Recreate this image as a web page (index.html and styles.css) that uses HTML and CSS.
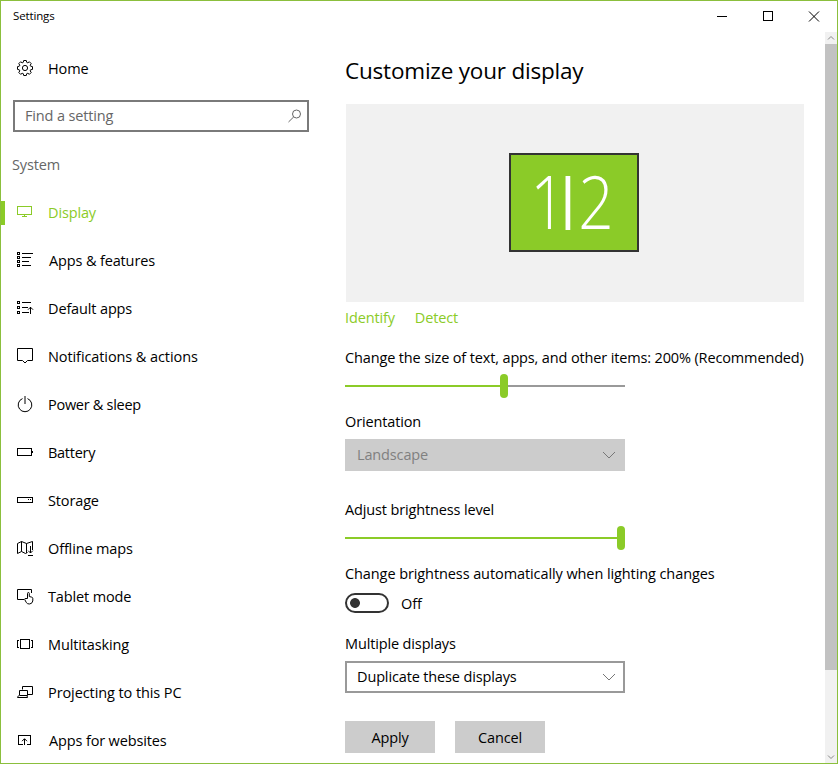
FILE: index.html
```html
<!DOCTYPE html>
<html lang="en">
<head>
<meta charset="utf-8">
<title>Settings</title>
<link rel="stylesheet" href="styles.css">
</head>
<body>
<div class="window">
  <header class="titlebar">
    <span class="caption">Settings</span>
    <div class="controls">
      <svg width="46" height="31"><path class="crisp" d="M17 15.500h10"/></svg>
      <svg width="46" height="31"><path class="crisp" d="M17.500 10.500h9v9h-9z"/></svg>
      <svg width="46" height="31"><path d="M17 10.500l10 10M27 10.500l-10 10"/></svg>
    </div>
  </header>
  <div class="content">
    <nav class="sidebar">
      <a class="item home"><svg class="icon" viewBox="0 0 18 18"><path d="M7.700 1.500h2.600l.4 1.800 1.100.5 1.600-1 1.800 1.800-1 1.600.4 1 1.900.4v2.800l-1.900.4-.4 1.100 1 1.600-1.800 1.800-1.600-1-1.100.4-.4 1.800H7.700l-.4-1.800-1.100-.4-1.600 1-1.800-1.800 1-1.600-.5-1.100-1.800-.4V7.600l1.800-.4.5-1-1-1.600 1.800-1.800 1.600 1 1.100-.5z"/><circle cx="9" cy="9" r="2.600"/></svg><span>Home</span></a>
      <div class="search"><span>Find a setting</span><svg width="16" height="16" viewBox="0 0 16 16"><circle cx="9.500" cy="6" r="4"/><path d="M6.600 9L1.500 14"/></svg></div>
      <h2 class="group"><span>System</span></h2>
      <a class="item active"><svg class="icon crisp" viewBox="0 0 18 18"><path d="M1.500 2.500h14v8h-14zM8.500 11v1M6 12.500h5"/></svg><span>Display</span></a>
      <a class="item indent"><svg class="icon crisp" viewBox="0 0 18 18"><path d="M1.500.5h2v2h-2zM1.500 4.500h2v2h-2zM1.500 8.500h2v2h-2zM1.500 12.500h2v2h-2zM6 1.500h11M6 5.500h9M6 9.500h7M6 13.500h9"/></svg><span>Apps &amp; features</span></a>
      <a class="item"><svg class="icon" viewBox="0 0 18 18"><path class="crisp" d="M1.500 1.500h2v2h-2zM1.500 6.500h2v2h-2zM1.500 11.500h2v2h-2zM6 2.500h9M6 7.500h6M6 12.500h7M14.500 7v7"/><path d="M12 9.700l2.500-2.500L17 9.700"/></svg><span>Default apps</span></a>
      <a class="item"><svg class="icon" viewBox="0 0 18 18"><path d="M1.500.5h15v12h-5L9 15l-2.500-2.500h-5z"/></svg><span class="wide">Notifications &amp; actions</span></a>
      <a class="item"><svg class="icon" viewBox="0 0 18 18"><path d="M6.500 2.600a6.800 6.800 0 1 0 5 0M9 0v8"/></svg><span class="tight">Power &amp; sleep</span></a>
      <a class="item"><svg class="icon crisp" viewBox="0 0 18 18"><path d="M1.500 4.500h14v7h-14zM16.500 7v2"/></svg><span class="tight">Battery</span></a>
      <a class="item"><svg class="icon crisp" viewBox="0 0 18 18"><path d="M1.500 5.500h15v5h-15zM12 7.500h1M14 7.500h1"/></svg><span>Storage</span></a>
      <a class="item"><svg class="icon" viewBox="0 0 18 18"><path d="M1.500 3.500l4-2 5 2 6-2V10M1.500 3.500v10l4-2 4 2 2-1M5.500 1.500v10M10.500 3.500v9.500M14.500 6v7M12.200 10.700l2.300 2.300 2.300-2.300M12 15.500h5"/></svg><span>Offline maps</span></a>
      <a class="item"><svg class="icon" viewBox="0 0 18 18"><path d="M8 11.500H1.500v-10h14V5M11.500 10.500V5.500q0-1 .9-1t.9 1v3l2.500.7q1 .3 1 1.300v2.500q-.7 3-3.500 3-2 0-3-1.500l-1.600-3q-.2-1.200 1.300-1z"/></svg><span>Tablet mode</span></a>
      <a class="item"><svg class="icon crisp" viewBox="0 0 18 18"><path d="M4.500 3.500h9v9h-9zM3 4.500H1.500v7H3M15 4.500h1.500v7H15"/></svg><span>Multitasking</span></a>
      <a class="item"><svg class="icon" viewBox="0 0 18 18"><path d="M6.500 5.500v-3h10v8h-5M3.500 6.500h8v5h-8zM2.500 11.500l-1 2h10l-.5-2"/></svg><span class="wide">Projecting to this PC</span></a>
      <a class="item indent"><svg class="icon" viewBox="0 0 18 18"><path class="crisp" d="M6.500 12.500h-4v-9h12v9h-4"/><path d="M8.500 13V7M6 9.200l2.500-2.500L11 9.200"/></svg><span>Apps for websites</span></a>
    </nav>
    <main class="main">
      <h1 class="title">Customize your display</h1>
      <div class="preview"><div class="monitor"><span class="one">1</span><span class="bar">|</span><span class="two">2</span></div></div>
      <div class="links"><a>Identify</a><a>Detect</a></div>
      <div class="label">Change the size of text, apps, and other items: 200% (Recommended)</div>
      <div class="slider"><i class="fill part"></i><i class="thumb"></i><i class="rest"></i></div>
      <div class="label orient">Orientation</div>
      <div class="select disabled"><span>Landscape</span><svg width="14" height="8"><path d="M1 1l6 6 6-6"/></svg></div>
      <div class="label bright">Adjust brightness level</div>
      <div class="slider"><i class="fill"></i><i class="thumb"></i></div>
      <div class="label auto wide">Change brightness automatically when lighting changes</div>
      <div class="switch"><i class="toggle"></i><span>Off</span></div>
      <div class="label multi">Multiple displays</div>
      <div class="select"><span>Duplicate these displays</span><svg width="14" height="8"><path d="M1 1l6 6 6-6"/></svg></div>
      <div class="buttons"><button>Apply</button><button>Cancel</button></div>
    </main>
    <div class="scrollbar">
      <svg width="12" height="12"><path d="M3 7.500l3-3 3 3"/></svg>
      <i class="grip"></i>
      <svg class="down" width="12" height="12"><path d="M3 4.500l3 3 3-3"/></svg>
    </div>
  </div>
</div>
</body>
</html>
```
FILE: styles.css
```css
* { box-sizing: border-box; }
body {
  margin: 0;
  color: #000;
  font: 14.5px/20px "Open Sans", "Noto Sans", sans-serif;
  letter-spacing: -.14px;
  white-space: nowrap;
}
svg { fill: none; stroke: currentColor; flex: none; display: block; }
.crisp { shape-rendering: crispEdges; }
.wide { letter-spacing: -.09px; }
.tight { letter-spacing: -.28px; }
.window {
  width: 838px;
  height: 764px;
  border: 1px solid #8bbf3d;
  background: #fff;
  overflow: hidden;
  display: flex;
  flex-direction: column;
}
.titlebar { height: 31px; display: flex; justify-content: space-between; padding-left: 12px; flex: none; }
.caption { font-size: 11.5px; line-height: 30px; }
.controls { display: flex; margin-right: -1px; }
.content { flex: 1; display: flex; min-height: 0; }
.sidebar { width: 344px; }
.item { height: 48px; display: flex; align-items: center; padding-left: 15px; gap: 14px; }
.indent { gap: 15px; }
.icon { width: 18px; height: 18px; }
.home { margin-top: 13px; }
.home .icon { margin-top: -2px; }
.search {
  width: 296px; height: 32px; margin: 7px 0 0 12px; padding: 0 4px 0 10px;
  border: 2px solid #7a7a7a; color: #666;
  display: flex; align-items: center; justify-content: space-between;
}
.group { margin: 23px 0 14px 11px; font-size: inherit; font-weight: 400; line-height: 20px; color: #666; }
.active { color: #8bcb28; background: linear-gradient(#8bcb28, #8bcb28) 0 50% / 4px 24px no-repeat; }
.main { flex: 1; }
.title { margin: 22px 0 0; font-size: 22.5px; font-weight: 400; line-height: 34px; letter-spacing: -.2px; }
.preview {
  width: 458px; height: 198px; margin: 16px 0 0 1px; background: #f1f1f1;
  display: flex; align-items: center; justify-content: center;
}
.monitor {
  width: 130px; height: 99px; margin: 0 2px 1px 0; padding-left: 16px;
  border: 2px solid #333; background: #8bcb28; color: #fff;
  font-weight: 300; font-size: 74px; line-height: 91px; letter-spacing: 0;
  display: flex;
}
.one, .two { width: 42px; transform: scaleX(.84); }
.bar {
  width: 15px; margin: 0 -.5px 0 -8.5px;
  font: 57px/87px "Liberation Sans", sans-serif;
}
.links { display: flex; gap: 20px; margin-top: 6px; color: #8bcb28; }
.label { height: 20px; margin-top: 20px; }
.slider { width: 280px; height: 24px; margin-top: 6px; display: flex; align-items: center; }
.fill { flex: 1; height: 2px; background: #8bcb28; }
.fill.part { flex: 0 0 155px; }
.thumb { width: 8px; height: 24px; border-radius: 4px; background: #8bcb28; }
.rest { flex: 1; height: 2px; background: #999; }
.label.orient { margin-top: 14px; }
.select {
  width: 280px; height: 32px; margin-top: 7px; padding: 0 7px 0 10px; border: 2px solid #999;
  display: flex; align-items: center; justify-content: space-between;
}
.select svg { color: #777; }
.disabled { background: #ccc; border-color: #ccc; color: #808080; }
.label.bright { margin-top: 29px; }
.label.auto { margin-top: 14px; }
.switch { display: flex; align-items: center; gap: 12px; height: 20px; margin-top: 9px; }
.switch span { padding-top: 2px; }
.toggle {
  width: 44px; height: 20px; border: 2px solid #333; border-radius: 10px;
  background: radial-gradient(circle at 8px 8px, #333 4.500px, transparent 5.300px);
}
.label.multi { margin-top: 21px; }
.buttons { display: flex; gap: 20px; margin-top: 28px; }
button { width: 90px; height: 32px; padding: 2px 0 0; border: 0; background: #ccc; color: #000; font: inherit; letter-spacing: inherit; }
.scrollbar { width: 12px; background: #f1f1f1; color: #888; display: flex; flex-direction: column; }
.grip { height: 626px; background: #c2c2c2; }
.down { margin-top: auto; }
```
